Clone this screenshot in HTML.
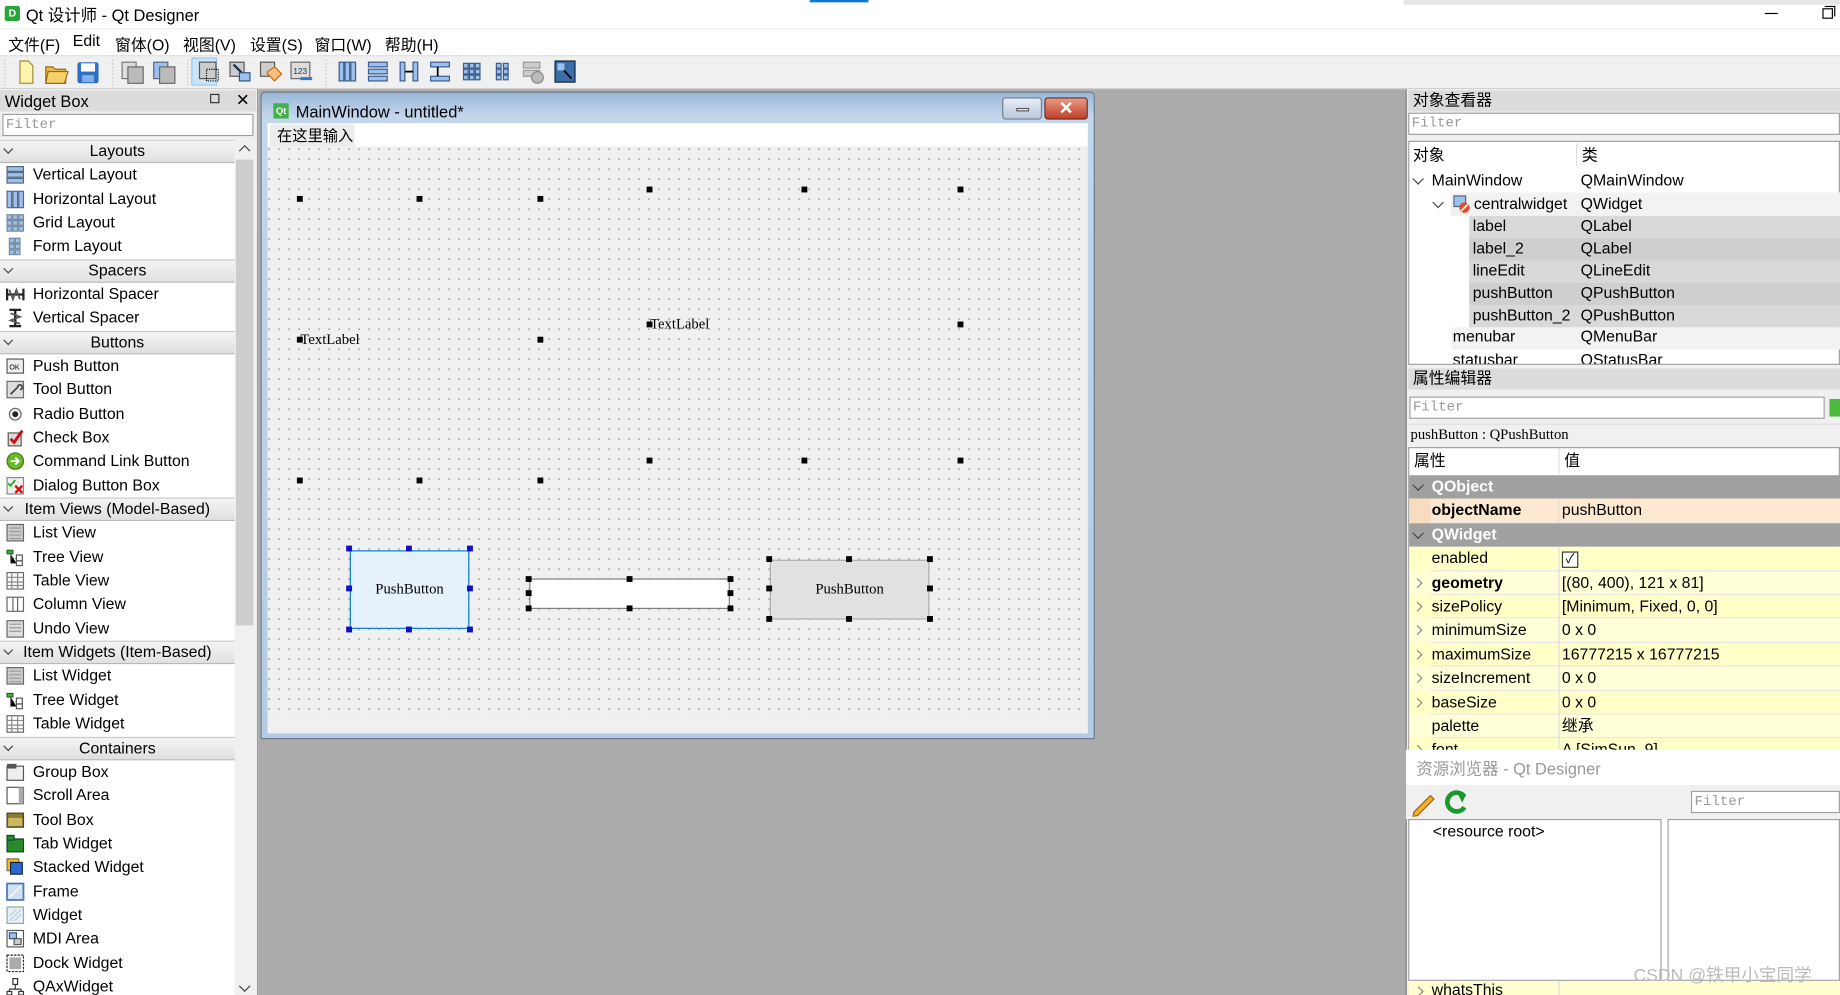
<!DOCTYPE html>
<html><head><meta charset="utf-8"><style>
*{box-sizing:border-box;margin:0;padding:0}
html,body{width:1840px;height:995px;overflow:hidden;background:#fff}
#r{position:absolute;left:0;top:0;width:1568px;height:848px;transform:scale(1.17347,1.17335);transform-origin:0 0;font-family:"Liberation Sans","Noto Sans CJK SC",sans-serif;font-size:13.5px;color:#000;background:#f0f0f0;overflow:hidden}
.a{position:absolute;white-space:nowrap}
.t{line-height:20px}
.ic{position:absolute;width:16px;height:16px}
.hd{position:absolute;background:linear-gradient(#f4f4f4,#e0e0e0);border-top:1px solid #c8c8c8;border-bottom:1px solid #b8b8b8;text-align:center;line-height:18px}
.chev{position:absolute;width:7px;height:7px;border-right:1.5px solid #444;border-bottom:1.5px solid #444;transform:rotate(45deg)}
.chr{position:absolute;width:6px;height:6px;border-right:1.3px solid #888;border-top:1.3px solid #888;transform:rotate(45deg)}
.h{position:absolute;width:5px;height:5px;background:#000}
.hb{position:absolute;width:5px;height:5px;background:#1010c0}
.serif{font-family:"Liberation Serif","Noto Serif CJK SC",serif;font-size:12.5px}
.filter{position:absolute;background:#fff;border:1px solid #a0a0a0;font-family:"Liberation Mono",monospace;font-size:12px;color:#999;padding-left:2px;line-height:16px}
</style></head><body><div id="r">

<div class="a" style="left:0;top:0;width:1568px;height:24px;background:#fff"></div>
<div class="a" style="left:690px;top:0;width:50px;height:2px;background:#0a7ad6"></div>
<div class="a" style="left:1196px;top:0;width:372px;height:4px;background:#e6e6e6"></div>
<div class="a" style="left:4px;top:5px;width:13px;height:13px;background:#2aa53a;border-radius:2px;color:#fff;font-size:9px;font-weight:bold;text-align:center;line-height:13px">D</div>
<div class="a" style="left:22px;top:3px;font-size:14px">Qt 设计师 - Qt Designer</div>
<div class="a" style="left:1504px;top:11px;width:11px;height:1px;background:#000"></div>
<div class="a" style="left:1553px;top:7px;width:9px;height:9px;border:1px solid #000"></div>
<div class="a" style="left:1555px;top:5px;width:9px;height:9px;border-top:1px solid #000;border-right:1px solid #000"></div>

<div class="a" style="left:0;top:25px;width:1568px;height:22px;background:#fff"></div>
<div class="a" style="left:7px;top:27px">文件(F)</div>
<div class="a" style="left:62px;top:27px">Edit</div>
<div class="a" style="left:98px;top:27px">窗体(O)</div>
<div class="a" style="left:156px;top:27px">视图(V)</div>
<div class="a" style="left:213px;top:27px">设置(S)</div>
<div class="a" style="left:268px;top:27px">窗口(W)</div>
<div class="a" style="left:328px;top:27px">帮助(H)</div>

<div class="a" style="left:0;top:47px;width:1568px;height:29px;background:#f0f0f0;border-top:1px solid #e0e0e0;border-bottom:1px solid #d0d0d0"></div>
<div class="a" style="left:163px;top:49px;width:22px;height:24px;background:#cce4f7;border:1px solid #99c9ef"></div>
<svg class="a" style="left:0;top:47px" width="500" height="29">
<g stroke="#bbb" stroke-dasharray="1 2"><line x1="4" y1="4" x2="4" y2="26"/><line x1="96" y1="4" x2="96" y2="26"/><line x1="160" y1="4" x2="160" y2="26"/><line x1="278" y1="4" x2="278" y2="26"/></g>
<path d="M17 5h7l4 4v15H17z" fill="#fdf3b0" stroke="#a08a30"/>
<path d="M39 10h6l2 2h9v12H39z" fill="#e6b84a" stroke="#9a6a10"/><path d="M41 14h17l-3 10H39z" fill="#f5cf6a" stroke="#9a6a10"/>
<rect x="66" y="6" width="18" height="18" fill="#2f6fc4" rx="2"/><rect x="69" y="7" width="12" height="7" fill="#fff"/><rect x="70" y="17" width="10" height="6" fill="#7fb0e8"/>
<rect x="104" y="6" width="12" height="14" fill="#ddd" stroke="#777"/><rect x="109" y="10" width="13" height="14" fill="#bbb" stroke="#666"/>
<rect x="131" y="6" width="12" height="14" fill="#9cc0ef" stroke="#567"/><rect x="136" y="10" width="13" height="14" fill="#bbb" stroke="#666"/>
<rect x="170" y="6" width="14" height="14" fill="#ccc" stroke="#555"/><rect x="176" y="12" width="10" height="10" fill="none" stroke="#000" stroke-dasharray="1 1"/>
<rect x="196" y="6" width="12" height="12" fill="#ccc" stroke="#555"/><path d="M199 8l8 8" stroke="#135" stroke-width="2"/><rect x="204" y="15" width="9" height="7" fill="#9cc0ef" stroke="#357"/>
<rect x="222" y="6" width="12" height="12" fill="#ccc" stroke="#555"/><path d="M228 14l6-4 6 6-6 6-6-6z" fill="#f8c080" stroke="#c60"/>
<rect x="248" y="6" width="16" height="14" fill="#ddd" stroke="#666"/><text x="250" y="16" font-size="7" fill="#235">123</text><path d="M256 20h10" stroke="#2a7ad0" stroke-width="2.5"/>
<g fill="#9cc0ef" stroke="#3a5a88"><rect x="289" y="6" width="4" height="16"/><rect x="294" y="6" width="4" height="16"/><rect x="299" y="6" width="4" height="16"/>
<rect x="314" y="6" width="16" height="4"/><rect x="314" y="12" width="16" height="4"/><rect x="314" y="18" width="16" height="4"/>
<rect x="341" y="6" width="4" height="16"/><rect x="352" y="6" width="4" height="16"/>
<rect x="367" y="6" width="16" height="4"/><rect x="367" y="18" width="16" height="4"/>
<rect x="395" y="7" width="4" height="4"/><rect x="400" y="7" width="4" height="4"/><rect x="405" y="7" width="4" height="4"/><rect x="395" y="12" width="4" height="4"/><rect x="400" y="12" width="4" height="4"/><rect x="405" y="12" width="4" height="4"/><rect x="395" y="17" width="4" height="4"/><rect x="400" y="17" width="4" height="4"/><rect x="405" y="17" width="4" height="4"/>
<rect x="423" y="7" width="4" height="4"/><rect x="429" y="7" width="4" height="4"/><rect x="423" y="12" width="4" height="4"/><rect x="429" y="12" width="4" height="4"/><rect x="423" y="17" width="4" height="4"/><rect x="429" y="17" width="4" height="4"/></g>
<path d="M345 14h7M373 10v8" stroke="#000" stroke-width="1.5"/>
<rect x="446" y="6" width="14" height="5" fill="#ccc" stroke="#999"/><rect x="446" y="13" width="14" height="5" fill="#ccc" stroke="#999"/><circle cx="458" cy="19" r="5" fill="#bbb" stroke="#888"/>
<rect x="473" y="5" width="17" height="18" fill="#3a6ea8" stroke="#123"/><path d="M476 8l11 12" stroke="#000" stroke-width="1.5"/><rect x="475" y="7" width="6" height="6" fill="#9cc0ef"/>
</svg>

<div class="a" style="left:220px;top:76px;width:978px;height:772px;background:#ababab"></div>

<div class="a" style="left:0;top:76px;width:220px;height:772px;background:#f0f0f0;border-right:1px solid #999"></div>
<div class="a" style="left:0;top:77px;width:218px;height:18px;background:#dcdcdc"></div>
<div class="a" style="left:4px;top:77px;font-size:14px;line-height:18px">Widget Box</div>
<div class="a" style="left:179px;top:80px;width:8px;height:8px;border:1px solid #333"></div>
<div class="a" style="left:201px;top:76px;font-size:14px;line-height:18px">✕</div>
<div class="filter" style="left:2px;top:97px;width:214px;height:19px">Filter</div>
<div class="a" style="left:0;top:118px;width:200px;height:730px;background:#fff"></div>
<div class="a" style="left:200px;top:118px;width:17px;height:730px;background:#f0f0f0"></div>
<div class="a" style="left:201px;top:136px;width:15px;height:397px;background:#cdcdcd"></div>
<div class="chev" style="left:205px;top:125px;transform:rotate(225deg)"></div>
<div class="chev" style="left:205px;top:837px"></div>

<div id="wb"></div>

<div class="a" style="left:222px;top:78px;width:711px;height:552px;background:linear-gradient(#9ab7d8,#c2d6ec 20px,#b4cbe6);border:1px solid #6f7f90;border-radius:4px 4px 0 0"></div>
<div class="a" style="left:233px;top:88px;width:13px;height:13px;background:#41b045;color:#fff;font-size:8px;font-weight:bold;line-height:13px;text-align:center">Qt</div>
<div class="a" style="left:252px;top:86px;font-size:14px;line-height:18px">MainWindow - untitled*</div>
<div class="a" style="left:854px;top:83px;width:34px;height:19px;background:linear-gradient(#e8eef6,#b8c8dc);border:1px solid #6f7f90;border-radius:3px"></div>
<div class="a" style="left:866px;top:92px;width:11px;height:3px;background:#fff;border:1px solid #555"></div>
<div class="a" style="left:890px;top:83px;width:37px;height:19px;background:linear-gradient(#e89a84,#c0402a);border:1px solid #6a2a20;border-radius:3px;color:#fff;font-weight:bold;font-size:15px;text-align:center;line-height:18px">✕</div>
<div class="a" style="left:228px;top:105px;width:699px;height:20px;background:#fff"></div>
<div class="a" style="left:230px;top:106px;width:72px;height:19px;background:#ececec"></div>
<div class="a" style="left:236px;top:106px;font-size:13px;line-height:19px">在这里输入</div>
<div class="a" style="left:228px;top:125px;width:699px;height:500px;background:#f0f0f0"></div>
<div class="a" style="left:228px;top:125px;width:820px;height:572px;transform:scale(0.85218);transform-origin:0 0;background-image:radial-gradient(circle at 1.5px 2.5px,#9a9a9a 0.7px,transparent 1px);background-size:10px 10px"></div>

<div class="h" style="left:253px;top:167px"></div><div class="h" style="left:355px;top:167px"></div><div class="h" style="left:458px;top:167px"></div>
<div class="h" style="left:551px;top:159px"></div><div class="h" style="left:683px;top:159px"></div><div class="h" style="left:816px;top:159px"></div>
<div class="h" style="left:253px;top:287px"></div><div class="h" style="left:458px;top:287px"></div>
<div class="h" style="left:551px;top:274px"></div><div class="h" style="left:816px;top:274px"></div>
<div class="h" style="left:253px;top:407px"></div><div class="h" style="left:355px;top:407px"></div><div class="h" style="left:458px;top:407px"></div>
<div class="h" style="left:551px;top:390px"></div><div class="h" style="left:683px;top:390px"></div><div class="h" style="left:816px;top:390px"></div>
<div class="a serif" style="left:256px;top:281px;line-height:16px">TextLabel</div>
<div class="a serif" style="left:554px;top:268px;line-height:16px">TextLabel</div>

<div class="a serif" style="left:298px;top:469px;width:102px;height:67px;background:#e5f1fb;border:1px solid #0078d7;text-align:center;line-height:65px">PushButton</div>
<div class="hb" style="left:295px;top:465px"></div><div class="hb" style="left:346px;top:465px"></div><div class="hb" style="left:398px;top:465px"></div>
<div class="hb" style="left:295px;top:499px"></div><div class="hb" style="left:398px;top:499px"></div>
<div class="hb" style="left:295px;top:534px"></div><div class="hb" style="left:346px;top:534px"></div><div class="hb" style="left:398px;top:534px"></div>

<div class="a" style="left:451px;top:493px;width:171px;height:26px;background:#fff;border:1px solid #7a7a7a"></div>
<div class="h" style="left:448px;top:491px"></div><div class="h" style="left:534px;top:491px"></div><div class="h" style="left:620px;top:491px"></div>
<div class="h" style="left:448px;top:503px"></div><div class="h" style="left:620px;top:503px"></div>
<div class="h" style="left:448px;top:516px"></div><div class="h" style="left:534px;top:516px"></div><div class="h" style="left:620px;top:516px"></div>

<div class="a serif" style="left:656px;top:477px;width:136px;height:51px;background:#e1e1e1;border:1px solid #adadad;text-align:center;line-height:49px">PushButton</div>
<div class="h" style="left:653px;top:474px"></div><div class="h" style="left:721px;top:474px"></div><div class="h" style="left:790px;top:474px"></div>
<div class="h" style="left:653px;top:499px"></div><div class="h" style="left:790px;top:499px"></div>
<div class="h" style="left:653px;top:525px"></div><div class="h" style="left:721px;top:525px"></div><div class="h" style="left:790px;top:525px"></div>

<div class="a" style="left:1197px;top:76px;width:371px;height:772px;background:#f0f0f0;border-left:2px solid #999"></div>
<div class="a" style="left:1200px;top:77px;width:368px;height:18px;background:#dcdcdc"></div>
<div class="a" style="left:1204px;top:77px;line-height:18px">对象查看器</div>
<div class="filter" style="left:1200px;top:96px;width:368px;height:19px">Filter</div>
<div class="a" style="left:1200px;top:120px;width:368px;height:191px;background:#fff;border:1px solid #a0a0a0"></div>
<div class="a" style="left:1343px;top:122px;width:1px;height:20px;background:#ddd"></div>
<div class="a t" style="left:1204px;top:123px">对象</div><div class="a t" style="left:1348px;top:123px">类</div>
<div class="a" style="left:1236px;top:164px;width:332px;height:20px;background:#f2f2f2"></div>
<div class="a" style="left:1252px;top:184px;width:316px;height:95px;background:linear-gradient(#d9d9d9 0 19px,#cfcfcf 19px 38px,#d9d9d9 38px 57px,#cfcfcf 57px 76px,#d9d9d9 76px)"></div>
<div class="a" style="left:1237px;top:279px;width:331px;height:19px;background:#f2f2f2"></div>
<div class="chev" style="left:1205px;top:149px"></div>
<div class="chev" style="left:1222px;top:169px"></div>
<svg class="a" style="left:1238px;top:166px" width="16" height="16"><rect x="1" y="1" width="10" height="9" fill="#9cc0ef" stroke="#567"/><circle cx="10" cy="11" r="4.5" fill="#e05030"/><path d="M7 14l6-6" stroke="#fff" stroke-width="1.3"/></svg>
<div class="a t" style="left:1220px;top:144px">MainWindow</div><div class="a t" style="left:1347px;top:144px">QMainWindow</div>
<div class="a t" style="left:1256px;top:164px">centralwidget</div><div class="a t" style="left:1347px;top:164px">QWidget</div>
<div class="a t" style="left:1255px;top:183px">label</div><div class="a t" style="left:1347px;top:183px">QLabel</div>
<div class="a t" style="left:1255px;top:202px">label_2</div><div class="a t" style="left:1347px;top:202px">QLabel</div>
<div class="a t" style="left:1255px;top:221px">lineEdit</div><div class="a t" style="left:1347px;top:221px">QLineEdit</div>
<div class="a t" style="left:1255px;top:240px">pushButton</div><div class="a t" style="left:1347px;top:240px">QPushButton</div>
<div class="a t" style="left:1255px;top:259px">pushButton_2</div><div class="a t" style="left:1347px;top:259px">QPushButton</div>
<div class="a t" style="left:1238px;top:277px">menubar</div><div class="a t" style="left:1347px;top:277px">QMenuBar</div>
<div class="a" style="left:1201px;top:298px;width:366px;height:12px;overflow:hidden"><div class="a t" style="left:37px;top:-1px">statusbar</div><div class="a t" style="left:146px;top:-1px">QStatusBar</div></div>

<div class="a" style="left:1200px;top:314px;width:368px;height:18px;background:#dcdcdc"></div>
<div class="a" style="left:1204px;top:314px;line-height:18px">属性编辑器</div>
<div class="filter" style="left:1201px;top:338px;width:354px;height:19px">Filter</div>
<div class="a" style="left:1559px;top:340px;width:9px;height:15px;background:#4cba3c"></div>
<div class="a" style="left:1200px;top:361px;width:368px;height:18px;background:#f0f0f0;border-top:1px solid #ddd"></div>
<div class="a serif" style="left:1202px;top:362px;line-height:16px">pushButton : QPushButton</div>
<div class="a" style="left:1200px;top:381px;width:368px;height:467px;background:#fff;border:1px solid #a0a0a0"></div>
<div class="a t" style="left:1205px;top:383px">属性</div><div class="a t" style="left:1333px;top:383px">值</div>
<div class="a" style="left:1328px;top:382px;width:1px;height:22px;background:#ddd"></div>
<div id="props"></div>

<div class="a" style="left:1198px;top:639px;width:370px;height:30px;background:#fff"></div>
<div class="a" style="left:1207px;top:645px;color:#999;font-size:14px;line-height:20px">资源浏览器 - Qt Designer</div>
<div class="a" style="left:1198px;top:669px;width:370px;height:29px;background:#f0f0f0"></div>
<svg class="a" style="left:1202px;top:672px" width="50" height="24"><path d="M3 20l14-14 3 3-14 14-4 1z" fill="#f0b030" stroke="#a06010"/><path d="M46 7a8 8 0 1 0 0 9" fill="none" stroke="#1a9a2a" stroke-width="4"/><path d="M40 4l7 2-3 6z" fill="#1a9a2a"/></svg>
<div class="filter" style="left:1441px;top:674px;width:127px;height:19px">Filter</div>
<div class="a" style="left:1200px;top:698px;width:216px;height:138px;background:#fff;border:1px solid #a0a0a0"></div>
<div class="a" style="left:1421px;top:698px;width:147px;height:138px;background:#fff;border:1px solid #a0a0a0"></div>
<div class="a t" style="left:1221px;top:699px">&lt;resource root&gt;</div>
<div class="a" style="left:1200px;top:836px;width:368px;height:12px;background:#ffffd0;overflow:hidden"><div class="chr" style="left:6px;top:6px"></div><div class="a t" style="left:20px;top:-2px">whatsThis</div><div class="a" style="left:128px;top:0;width:1px;height:12px;background:#ddd"></div></div>
<div class="a" style="left:1392px;top:822px;color:#bbb;font-size:15px;line-height:20px">CSDN @铁甲小宝同学</div>
</div>
<script>
var wb=[["h","Layouts"],["i","Vertical Layout","vl"],["i","Horizontal Layout","hl"],["i","Grid Layout","gl"],["i","Form Layout","fl"],
["h","Spacers"],["i","Horizontal Spacer","hs"],["i","Vertical Spacer","vs"],["h","Buttons"],["i","Push Button","pb"],["i","Tool Button","tb"],["i","Radio Button","rb"],["i","Check Box","cb"],["i","Command Link Button","cl"],["i","Dialog Button Box","db"],
["h","Item Views (Model-Based)"],["i","List View","lv"],["i","Tree View","tv"],["i","Table View","tav"],["i","Column View","cv"],["i","Undo View","uv"],
["h","Item Widgets (Item-Based)"],["i","List Widget","lv"],["i","Tree Widget","tv"],["i","Table Widget","tav"],
["h","Containers"],["i","Group Box","gb"],["i","Scroll Area","sa"],["i","Tool Box","tbx"],["i","Tab Widget","tw"],["i","Stacked Widget","sw"],["i","Frame","fr"],["i","Widget","wd"],["i","MDI Area","md"],["i","Dock Widget","dw"],["i","QAxWidget","ax"]];
var icons={
vl:'<rect x="1" y="1" width="14" height="4" fill="#9cc0ef" stroke="#567"/><rect x="1" y="6" width="14" height="4" fill="#9cc0ef" stroke="#567"/><rect x="1" y="11" width="14" height="4" fill="#9cc0ef" stroke="#567"/>',
hl:'<rect x="1" y="1" width="4" height="14" fill="#9cc0ef" stroke="#567"/><rect x="6" y="1" width="4" height="14" fill="#9cc0ef" stroke="#567"/><rect x="11" y="1" width="4" height="14" fill="#9cc0ef" stroke="#567"/>',
gl:'<g fill="#9cc0ef" stroke="#789"><rect x="1" y="1" width="4" height="4"/><rect x="6" y="1" width="4" height="4"/><rect x="11" y="1" width="4" height="4"/><rect x="1" y="6" width="4" height="4"/><rect x="6" y="6" width="4" height="4"/><rect x="11" y="6" width="4" height="4"/><rect x="1" y="11" width="4" height="4"/><rect x="6" y="11" width="4" height="4"/><rect x="11" y="11" width="4" height="4"/></g>',
fl:'<g fill="#9cc0ef" stroke="#789"><rect x="3" y="1" width="4" height="4"/><rect x="8" y="1" width="4" height="4"/><rect x="3" y="6" width="4" height="4"/><rect x="8" y="6" width="4" height="4"/><rect x="3" y="11" width="4" height="4"/><rect x="8" y="11" width="4" height="4"/></g>',
hs:'<path d="M1 3v10M15 3v10M2 8h12" stroke="#222" stroke-width="2"/><path d="M3 4l3 8 3-8 3 8" stroke="#555" fill="none" stroke-width="1.5"/>',
vs:'<path d="M3 1h10M3 15h10M8 2v12" stroke="#222" stroke-width="2"/><path d="M4 4l8 3-8 3 8 3" stroke="#555" fill="none" stroke-width="1.5"/>',
pb:'<rect x="1" y="2" width="14" height="12" fill="#eee" stroke="#555"/><text x="3" y="11" font-size="6" fill="#000">OK</text>',
tb:'<rect x="1" y="1" width="14" height="14" fill="#ddd" stroke="#666"/><path d="M4 12l6-6a2 2 0 1 1 2 2" stroke="#444" fill="none" stroke-width="1.5"/>',
rb:'<circle cx="8" cy="8" r="5" fill="#eee" stroke="#666"/><circle cx="8" cy="8" r="2.5" fill="#222"/>',
cb:'<rect x="2" y="4" width="11" height="11" fill="#ddd" stroke="#555"/><path d="M4 9l3 3 7-10" stroke="#d01010" stroke-width="2.5" fill="none"/>',
cl:'<circle cx="8" cy="8" r="7" fill="#6cb82c" stroke="#3a7a10"/><path d="M4 8h7M8 5l3 3-3 3" stroke="#fff" stroke-width="1.6" fill="none"/>',
db:'<rect x="1" y="1" width="14" height="14" fill="#eee" stroke="#888"/><path d="M2 6l2 2 4-5" stroke="#2a2" stroke-width="1.5" fill="none"/><path d="M8 8l6 6M14 8l-6 6" stroke="#d01010" stroke-width="2"/>',
lv:'<rect x="1" y="1" width="14" height="14" fill="#ccc" stroke="#666"/><path d="M3 4h10M3 7h10M3 10h10M3 13h10" stroke="#999"/>',
tv:'<rect x="1" y="2" width="5" height="3" fill="#4a4" stroke="#262"/><path d="M4 5v8h5M4 9h5" stroke="#555" stroke-dasharray="1 1"/><rect x="9" y="6" width="5" height="5" fill="#fff" stroke="#555"/><rect x="9" y="11" width="5" height="4" fill="#fff" stroke="#555"/>',
tav:'<rect x="1" y="1" width="14" height="14" fill="#fff" stroke="#666"/><path d="M1 5h14M1 9h14M1 12h14M5 1v14M10 1v14" stroke="#888"/>',
cv:'<rect x="1" y="2" width="14" height="12" fill="#fff" stroke="#666"/><path d="M6 2v12M10 2v12" stroke="#666"/>',
uv:'<rect x="1" y="1" width="14" height="14" fill="#ddd" stroke="#666"/><path d="M3 4h10M3 7h10M3 10h10" stroke="#999"/>',
gb:'<rect x="1" y="3" width="14" height="12" fill="#eee" stroke="#555"/><rect x="1" y="1" width="8" height="4" fill="#555"/>',
sa:'<rect x="1" y="1" width="14" height="14" fill="#fff" stroke="#555"/><rect x="11" y="1" width="4" height="14" fill="#aaa"/>',
tbx:'<rect x="1" y="2" width="14" height="12" fill="#8a7a2a" stroke="#443"/><rect x="2" y="6" width="12" height="7" fill="#cdb860"/>',
tw:'<rect x="1" y="4" width="14" height="11" fill="#2a8a2a" stroke="#143"/><rect x="1" y="1" width="6" height="4" fill="#2a8a2a" stroke="#143"/>',
sw:'<rect x="1" y="1" width="10" height="10" fill="#f0c020" stroke="#864"/><rect x="4" y="4" width="10" height="10" fill="#2a6ad0" stroke="#124"/>',
fr:'<rect x="1" y="1" width="14" height="14" fill="#cfe0f5" stroke="#4a7ab8" stroke-width="1.5"/><path d="M3 13l10-10" stroke="#fff"/>',
wd:'<rect x="1" y="1" width="14" height="14" fill="#e8eef6" stroke="#8aa"/><path d="M3 13l10-10M3 9l6-6M7 13l6-6" stroke="#bcd"/>',
md:'<rect x="1" y="1" width="14" height="14" fill="#fff" stroke="#555"/><rect x="3" y="3" width="6" height="5" fill="#9cc0ef" stroke="#357"/><rect x="7" y="8" width="6" height="5" fill="#ccc" stroke="#555"/>',
dw:'<rect x="1" y="1" width="14" height="14" fill="#fff" stroke="#222" stroke-dasharray="2 1"/><rect x="3" y="3" width="10" height="10" fill="#aaa"/>',
ax:'<rect x="6" y="1" width="4" height="5" fill="#fff" stroke="#333"/><path d="M8 6v4M3 10h10M3 10v4M13 10v4" stroke="#333"/><rect x="1" y="12" width="4" height="3" fill="#fff" stroke="#333"/><rect x="11" y="12" width="4" height="3" fill="#fff" stroke="#333"/>'
};
var h='',y=119;
wb.forEach(function(e){
 if(e[0]=="h"){h+='<div class="hd" style="left:0;top:'+y+'px;width:200px;height:20px">'+e[1]+'</div><div class="chev" style="left:4px;top:'+(y+5)+'px;width:6px;height:6px"></div>';y+=20.3;}
 else{h+='<svg class="ic" style="left:5px;top:'+(y+2)+'px" viewBox="0 0 16 16">'+icons[e[2]]+'</svg><div class="a t" style="left:28px;top:'+y+'px">'+e[1]+'</div>';y+=20.35;}
});
document.getElementById('wb').outerHTML=h;
var pr=[["g","QObject"],["p","objectName","pushButton",1,0,1],["g","QWidget"],["y","enabled","☑",0,0],["y","geometry","[(80, 400), 121 x 81]",1,1],["y","sizePolicy","[Minimum, Fixed, 0, 0]",0,1],["y","minimumSize","0 x 0",0,1],["y","maximumSize","16777215 x 16777215",0,1],["y","sizeIncrement","0 x 0",0,1],["y","baseSize","0 x 0",0,1],["y","palette","继承",0,0],["y","font","A  [SimSun, 9]",0,1]];
h='';y=405;
pr.forEach(function(e,i){
 var ht=20.4;
 if(e[0]=="g"){h+='<div class="a" style="left:1201px;top:'+y+'px;width:367px;height:'+ht+'px;background:#a0a0a0"></div><div class="chev" style="left:1205px;top:'+(y+5)+'px"></div><div class="a t" style="left:1220px;top:'+y+'px;color:#fff;font-weight:bold">'+e[1]+'</div>';}
 else{var bg=e[0]=="p"?"#fde9d0":(i%2?"#ffffc8":"#ffffd8");var lb=e[0]=="p"?"#f8dcc0":bg;
 var val=e[2]=="☑"?'<div class="a" style="left:1331px;top:'+(y+4)+'px;width:14px;height:14px;border:1px solid #333;background:#fff;font-size:11px;line-height:12px;text-align:center">✓</div>':'<div class="a t" style="left:1331px;top:'+y+'px">'+e[2]+'</div>';
 h+='<div class="a" style="left:1201px;top:'+y+'px;width:367px;height:'+ht+'px;background:'+bg+';border-bottom:1px solid #e6e6e6"></div><div class="a" style="left:1201px;top:'+y+'px;width:18px;height:'+ht+'px;background:'+lb+'"></div><div class="a" style="left:1328px;top:'+y+'px;width:1px;height:'+ht+'px;background:#ddd"></div>'+(e[4]?'<div class="chr" style="left:1205px;top:'+(y+7)+'px"></div>':'')+'<div class="a t" style="left:1220px;top:'+y+'px;'+(e[3]?'font-weight:bold':'')+'">'+e[1]+'</div>'+val;}
 y+=ht;
});
document.getElementById('props').outerHTML=h;
</script>
</body></html>
